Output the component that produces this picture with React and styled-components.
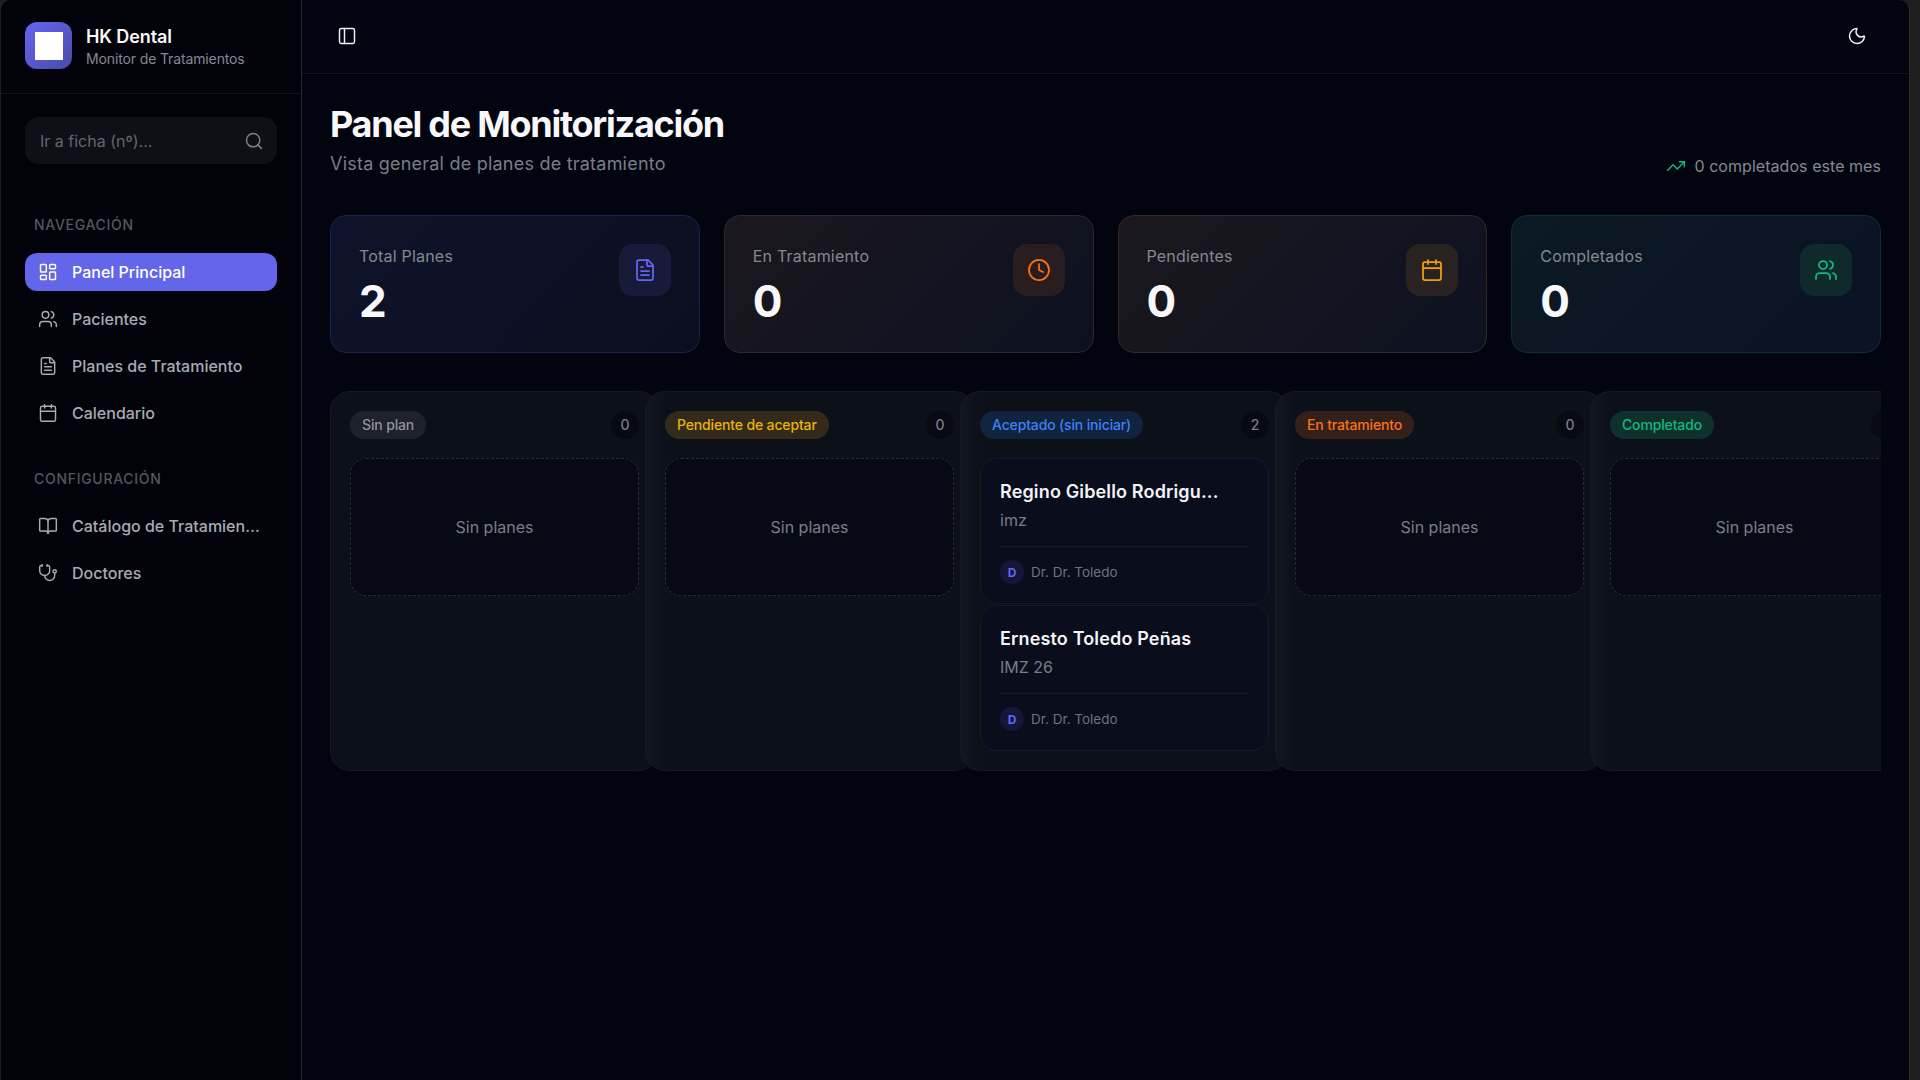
import React from 'react';
import styled, { createGlobalStyle } from 'styled-components';
import {
  BookOpen,
  Calendar,
  Clock,
  FileText,
  LayoutDashboard,
  Moon,
  PanelLeft,
  Search,
  Stethoscope,
  TrendingUp,
  Users,
} from 'lucide-react';

const GlobalStyle = createGlobalStyle`
  html, body {
    margin: 0;
    padding: 0;
    height: 100%;
    background: #1f1f1f;
    overflow: hidden;
  }
  body {
    font-family: 'Inter', 'Liberation Sans', sans-serif;
    -webkit-font-smoothing: antialiased;
  }
  * {
    box-sizing: border-box;
  }
`;

const Shell = styled.div`
  display: flex;
  height: 100vh;
  margin: 0 10px 0 1px;
  background: #02040f;
  border-right: 1px solid #2b2b2b;
  border-radius: 10px 10px 0 0;
  overflow: hidden;
`;

const Sidebar = styled.aside`
  flex: none;
  width: 301px;
  display: flex;
  flex-direction: column;
  background: #02030a;
  border-right: 1px solid #22252b;
`;

const Brand = styled.div`
  height: 94px;
  padding: 22px 24px 0;
  display: flex;
  gap: 14px;
  border-bottom: 1px solid #12141a;
`;

const Logo = styled.div`
  flex: none;
  width: 47px;
  height: 47px;
  display: flex;
  align-items: center;
  justify-content: center;
  border-radius: 12px;
  background: linear-gradient(135deg, #6366f1, #4a4aa8);
`;

const LogoMark = styled.div`
  width: 28px;
  height: 28px;
  background: #fff;
`;

const BrandText = styled.div`
  display: flex;
  flex-direction: column;
  padding-top: 1px;
`;

const BrandName = styled.span`
  font-size: 18px;
  line-height: 28px;
  font-weight: 600;
  letter-spacing: -0.09px;
  color: #f8f8fa;
`;

const BrandTag = styled.span`
  font-size: 14px;
  line-height: 16px;
  letter-spacing: -0.13px;
  color: #85888f;
`;

const SidebarBody = styled.div`
  padding: 23px 24px;
`;

const SearchBox = styled.div`
  height: 47px;
  padding: 0 13px 0 15px;
  display: flex;
  align-items: center;
  justify-content: space-between;
  border-radius: 14px;
  background: #0d1117;
  color: #7f8288;
  font-size: 16px;
`;

const SearchHint = styled.span`
  color: #62656c;
`;

const NavLabel = styled.div`
  margin-top: ${(p) => p.$top}px;
  margin-bottom: 20px;
  padding-left: 9px;
  font-size: 14px;
  line-height: 17px;
  font-weight: 500;
  letter-spacing: 0.05em;
  text-transform: uppercase;
  color: #54575e;
`;

const NavList = styled.nav`
  display: flex;
  flex-direction: column;
  gap: 9px;
`;

const NavItem = styled.a`
  height: 38px;
  padding: 0 15px 0 13px;
  display: flex;
  align-items: center;
  gap: 14px;
  border-radius: 12px;
  font-size: 16px;
  font-weight: 500;
  color: ${(p) => (p.$active ? '#ffffff' : '#a8abb1')};
  background: ${(p) => (p.$active ? '#6366e8' : 'transparent')};

  svg {
    flex: none;
  }
`;

const NavText = styled.span`
  overflow: hidden;
  white-space: nowrap;
  text-overflow: ellipsis;
`;

const Main = styled.main`
  flex: 1;
  min-width: 0;
  display: flex;
  flex-direction: column;
`;

const TopBar = styled.header`
  flex: none;
  height: 74px;
  padding: 0 42px 2px 35px;
  display: flex;
  align-items: center;
  justify-content: space-between;
  border-bottom: 1px solid #12151c;
  color: #f2f2f4;
`;

const Content = styled.div`
  padding: 30px 28px 0;
`;

const TitleRow = styled.div`
  display: flex;
  align-items: flex-end;
  justify-content: space-between;
`;

const Title = styled.h1`
  margin: 0;
  font-size: 36px;
  line-height: 40px;
  font-weight: 700;
  letter-spacing: -0.035em;
  color: #f8f8fa;
`;

const Subtitle = styled.p`
  margin: 6px 0 0;
  font-size: 18px;
  line-height: 28px;
  letter-spacing: 0.22px;
  color: #7a7e87;
`;

const MonthNote = styled.div`
  display: flex;
  align-items: center;
  gap: 8px;
  font-size: 16px;
  line-height: 24px;
  letter-spacing: 0.05px;
  color: #858992;

  svg {
    color: #10b981;
  }
`;

const StatGrid = styled.section`
  margin-top: 37px;
  display: grid;
  grid-template-columns: repeat(4, 1fr);
  gap: 24px;
`;

const statThemes = {
  indigo: {
    bg: 'linear-gradient(135deg, #0e132b, #0a0f20)',
    line: '#1c2249',
    tile: '#181a3a',
    ink: '#6366f1',
  },
  orange: {
    bg: 'linear-gradient(135deg, #1b171e, #0c1120)',
    line: '#33252a',
    tile: '#2a1d20',
    ink: '#f97316',
  },
  amber: {
    bg: 'linear-gradient(135deg, #1b181e, #0c1120)',
    line: '#332824',
    tile: '#282220',
    ink: '#f59e0b',
  },
  green: {
    bg: 'linear-gradient(135deg, #0b1a24, #0a1224)',
    line: '#0f2f36',
    tile: '#0f2a2d',
    ink: '#10b981',
  },
};

const StatCard = styled.article`
  height: 138px;
  padding: 28px;
  display: flex;
  align-items: flex-start;
  justify-content: space-between;
  border: 1px solid ${(p) => statThemes[p.$tone].line};
  border-radius: 16px;
  background: ${(p) => statThemes[p.$tone].bg};
`;

const StatInfo = styled.div`
  display: flex;
  flex-direction: column;
`;

const StatLabel = styled.span`
  font-size: 16px;
  line-height: 24px;
  letter-spacing: 0.2px;
  color: #85888f;
`;

const StatValue = styled.span`
  margin-top: 8px;
  font-size: 44px;
  line-height: 50px;
  font-weight: 700;
  color: #f8f8fa;
`;

const StatIcon = styled.div`
  width: 52px;
  height: 52px;
  display: flex;
  align-items: center;
  justify-content: center;
  border-radius: 14px;
  background: ${(p) => statThemes[p.$tone].tile};
  color: ${(p) => statThemes[p.$tone].ink};
`;

const Board = styled.section`
  margin-top: 38px;
  display: flex;
  align-items: stretch;
  overflow: hidden;
`;

const Column = styled.div`
  flex: none;
  width: 329px;
  margin-right: -14px;
  padding: 19px;
  border: 1px solid #151a23;
  border-radius: 20px;
  background: linear-gradient(to right, #12171f, #0c1119 20px);

  &:first-child {
    background: #0c1119;
  }
`;

const ColumnHead = styled.div`
  height: 28px;
  margin-bottom: 19px;
  display: flex;
  align-items: center;
  justify-content: space-between;
`;

const pillTones = {
  gray: { bg: '#1e222a', ink: '#8f939c' },
  yellow: { bg: '#342a1b', ink: '#eab308' },
  blue: { bg: '#12233f', ink: '#3b82f6' },
  orange: { bg: '#33201a', ink: '#f97316' },
  green: { bg: '#10312b', ink: '#10b981' },
};

const Pill = styled.span`
  height: 28px;
  padding: 0 12px 1px;
  display: inline-flex;
  align-items: center;
  border-radius: 14px;
  font-size: 14px;
  font-weight: 500;
  letter-spacing: -0.15px;
  background: ${(p) => pillTones[p.$tone].bg};
  color: ${(p) => pillTones[p.$tone].ink};
`;

const Count = styled.span`
  width: 28px;
  height: 28px;
  padding-bottom: 1px;
  display: flex;
  align-items: center;
  justify-content: center;
  border-radius: 50%;
  font-size: 14px;
  font-weight: 500;
  background: #070a12;
  color: #7a7e87;
`;

const EmptySlot = styled.div`
  height: 138px;
  display: flex;
  align-items: center;
  justify-content: center;
  border: 1px dashed #262b36;
  border-radius: 16px;
  background: #070a14;
  font-size: 16px;
  color: #7a7e87;
`;

const PlanList = styled.div`
  display: flex;
  flex-direction: column;
  gap: 1px;
`;

const PlanCard = styled.div`
  height: 146px;
  padding: 20px 19px 0;
  border: 1px solid #151a26;
  border-radius: 16px;
  background: #090d1c;
`;

const PlanName = styled.div`
  font-size: 18px;
  line-height: 26px;
  font-weight: 600;
  letter-spacing: 0.15px;
  color: #f4f4f6;
  white-space: nowrap;
`;

const PlanNote = styled.div`
  margin-top: 3px;
  font-size: 16px;
  line-height: 24px;
  color: #7a7e87;
`;

const PlanFoot = styled.div`
  margin-top: 14px;
  padding-top: 13px;
  display: flex;
  align-items: center;
  gap: 7px;
  border-top: 1px solid #161b29;
  font-size: 13.5px;
  color: #6f737c;
`;

const Avatar = styled.span`
  flex: none;
  width: 24px;
  height: 24px;
  display: flex;
  align-items: center;
  justify-content: center;
  border-radius: 50%;
  font-size: 12px;
  font-weight: 700;
  background: #14173a;
  color: #6366f1;
`;

const mainNav = [
  { label: 'Panel Principal', icon: LayoutDashboard, active: true },
  { label: 'Pacientes', icon: Users },
  { label: 'Planes de Tratamiento', icon: FileText },
  { label: 'Calendario', icon: Calendar },
];

const configNav = [
  { label: 'Catálogo de Tratamientos', icon: BookOpen },
  { label: 'Doctores', icon: Stethoscope },
];

const stats = [
  { label: 'Total Planes', value: 2, tone: 'indigo', icon: FileText },
  { label: 'En Tratamiento', value: 0, tone: 'orange', icon: Clock },
  { label: 'Pendientes', value: 0, tone: 'amber', icon: Calendar },
  { label: 'Completados', value: 0, tone: 'green', icon: Users },
];

const columns = [
  { label: 'Sin plan', tone: 'gray', plans: [] },
  { label: 'Pendiente de aceptar', tone: 'yellow', plans: [] },
  {
    label: 'Aceptado (sin iniciar)',
    tone: 'blue',
    plans: [
      { name: 'Regino Gibello Rodrigu...', note: 'imz' },
      { name: 'Ernesto Toledo Peñas', note: 'IMZ 26' },
    ],
  },
  { label: 'En tratamiento', tone: 'orange', plans: [] },
  { label: 'Completado', tone: 'green', plans: [] },
];

const NavGroup = ({ items }) => (
  <NavList>
    {items.map(({ label, icon: Icon, active }) => (
      <NavItem key={label} $active={active}>
        <Icon size={20} strokeWidth={1.75} />
        <NavText>{label}</NavText>
      </NavItem>
    ))}
  </NavList>
);

export default function App() {
  return (
    <>
      <GlobalStyle />
      <Shell>
        <Sidebar>
          <Brand>
            <Logo>
              <LogoMark />
            </Logo>
            <BrandText>
              <BrandName>HK Dental</BrandName>
              <BrandTag>Monitor de Tratamientos</BrandTag>
            </BrandText>
          </Brand>
          <SidebarBody>
            <SearchBox>
              <SearchHint>Ir a ficha (nº)...</SearchHint>
              <Search size={20} strokeWidth={1.75} />
            </SearchBox>
            <NavLabel $top={52}>Navegación</NavLabel>
            <NavGroup items={mainNav} />
            <NavLabel $top={38}>Configuración</NavLabel>
            <NavGroup items={configNav} />
          </SidebarBody>
        </Sidebar>
        <Main>
          <TopBar>
            <PanelLeft size={20} strokeWidth={1.75} />
            <Moon size={20} strokeWidth={1.75} />
          </TopBar>
          <Content>
            <TitleRow>
              <div>
                <Title>Panel de Monitorización</Title>
                <Subtitle>Vista general de planes de tratamiento</Subtitle>
              </div>
              <MonthNote>
                <TrendingUp size={20} strokeWidth={1.75} />0 completados este mes
              </MonthNote>
            </TitleRow>
            <StatGrid>
              {stats.map(({ label, value, tone, icon: Icon }) => (
                <StatCard key={label} $tone={tone}>
                  <StatInfo>
                    <StatLabel>{label}</StatLabel>
                    <StatValue>{value}</StatValue>
                  </StatInfo>
                  <StatIcon $tone={tone}>
                    <Icon size={24} strokeWidth={1.75} />
                  </StatIcon>
                </StatCard>
              ))}
            </StatGrid>
            <Board>
              {columns.map((col) => (
                <Column key={col.label}>
                  <ColumnHead>
                    <Pill $tone={col.tone}>{col.label}</Pill>
                    <Count>{col.plans.length}</Count>
                  </ColumnHead>
                  {col.plans.length === 0 ? (
                    <EmptySlot>Sin planes</EmptySlot>
                  ) : (
                    <PlanList>
                      {col.plans.map((plan) => (
                        <PlanCard key={plan.name}>
                          <PlanName>{plan.name}</PlanName>
                          <PlanNote>{plan.note}</PlanNote>
                          <PlanFoot>
                            <Avatar>D</Avatar>
                            Dr. Dr. Toledo
                          </PlanFoot>
                        </PlanCard>
                      ))}
                    </PlanList>
                  )}
                </Column>
              ))}
            </Board>
          </Content>
        </Main>
      </Shell>
    </>
  );
}
